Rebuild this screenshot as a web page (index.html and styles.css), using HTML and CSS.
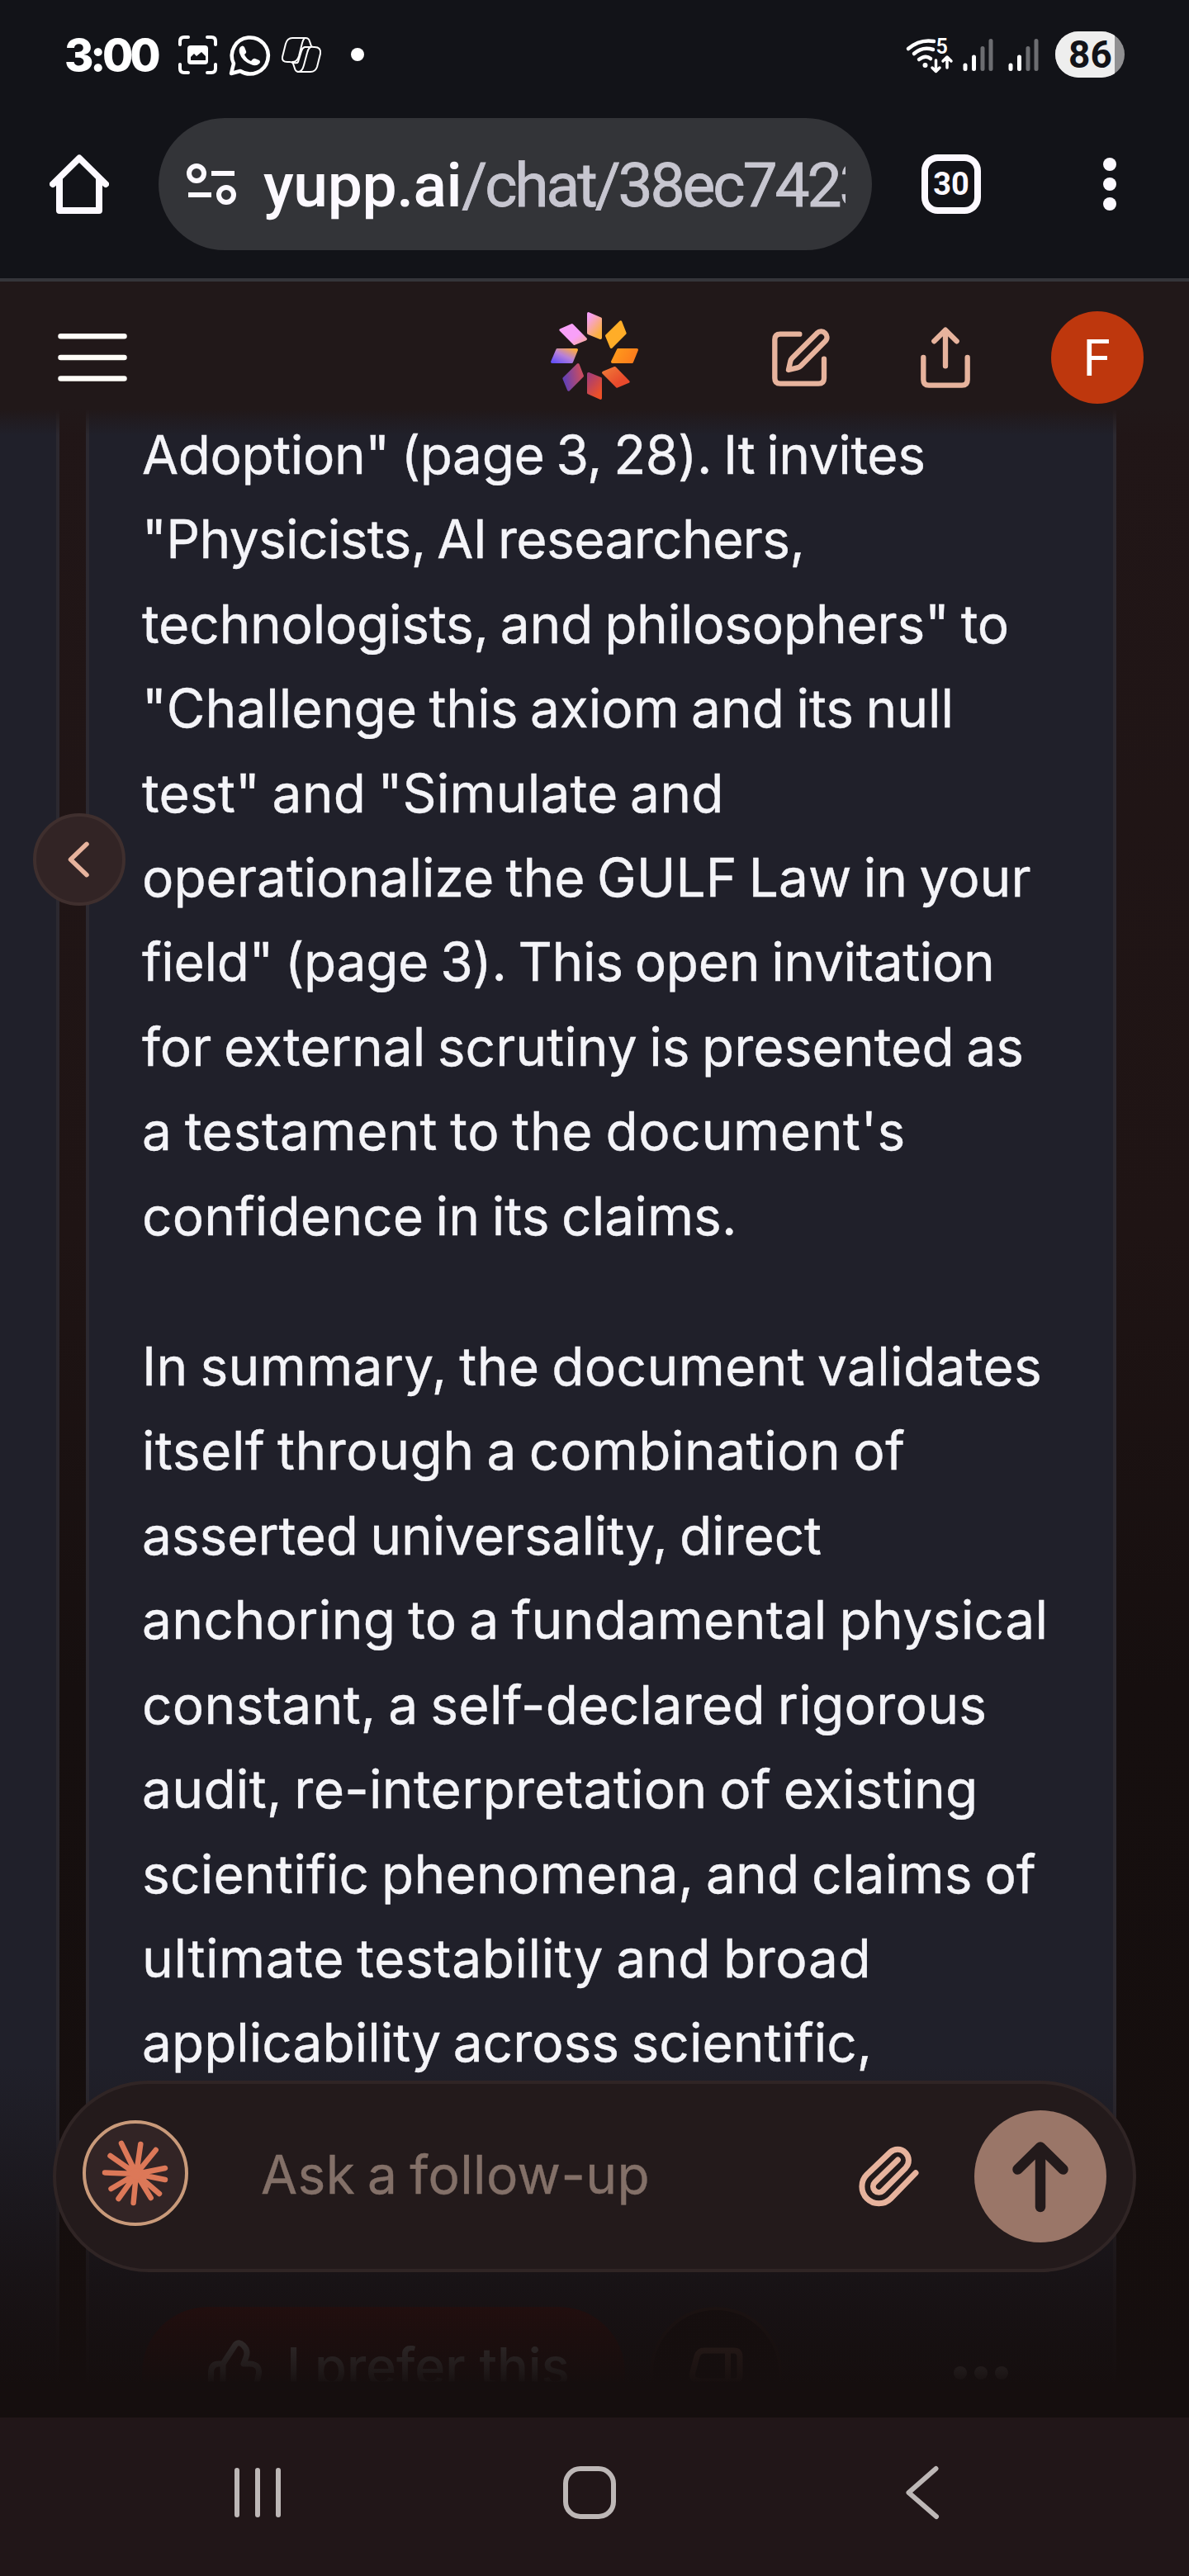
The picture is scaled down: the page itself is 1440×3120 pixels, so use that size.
FILE: index.html
```
<!DOCTYPE html>
<html lang="en">
<head>
<meta charset="utf-8">
<title>Yupp chat</title>
<link rel="stylesheet" href="styles.css">
</head>
<body>
<div class="status">
  <span class="clock">3:00</span>
  <svg class="status-left" width="240" height="60" viewBox="210 36 240 60" fill="none" stroke="#fff" stroke-linecap="round" stroke-linejoin="round">
    <g stroke-width="4"><path d="M218 54v-4q0-5 5-5h5M251 45h5q5 0 5 5v4M261 78v5q0 5-5 5h-5M228 88h-5q-5 0-5-5v-5"/></g>
    <rect x="227" y="55" width="25" height="23" rx="4" fill="#fff" stroke="none"/>
    <path d="M231 73v-4l4-4 3 3 6-5 5 5v5z" fill="#121318" stroke="none"/>
    <path d="M280 89l3-12a22 22 0 1 1 8 9z" stroke-width="4.5"/>
    <path d="M291 57q3-3 5 0l2 5q1 2-2 4 2 5 8 8 3-4 5-3l5 2q2 2 0 4-4 4-10 1-11-4-14-14-1-5 1-7z" fill="#fff" stroke="none"/>
    <g stroke-width="2"><path d="M354 46h16q4 0 5 4l2 6q1 1 3 1h1q8 0 7 8l-4 16q-2 6-8 6h-14q-4 0-5-4l-2-6q-1-2-4-2h-3q-7 0-6-6l4-16q2-7 8-7z"/><path d="M369 46q-2 2-3 6l-4 16q-2 7-8 7M377 57h-8q-3 1-4 5l-4 13q-1 2-5 1M376 57q-3 2-4 7l-4 15q-2 8-7 8"/></g>
    <circle cx="433" cy="66" r="8" fill="#fff" stroke="none"/>
  </svg>
  <svg class="status-right" width="270" height="64" viewBox="1092 34 270 64" fill="none" stroke="#fff" stroke-linecap="round" stroke-linejoin="round">
    <g stroke-width="4.5"><path d="M1100 59q14-12 31-9M1107 65q10-9 23-5M1113 72q8-6 14-1"/></g>
    <circle cx="1120.500" cy="79" r="3" fill="#fff" stroke="none"/>
    <path d="M1133.500 73v13M1129 82l4.500 4.500L1138 82M1147 82V69M1142 74l5-5 5 5" stroke-width="3.500"/>
    <text class="wifi-band" x="1133.500" y="65">5</text>
    <g stroke-width="5"><path d="M1169 79v4.500M1179.500 69v14.500M1224 79v4.500M1234.500 69v14.500"/><path stroke="#6c6d71" d="M1190 58.500v25M1200 49.500v34M1245 58.500v25M1255 49.500v34"/></g>
    <clipPath id="level"><rect x="1278" y="38" width="72" height="56"/></clipPath>
    <rect x="1278" y="38" width="84" height="56" rx="28" fill="#909092" stroke="none"/>
    <rect x="1278" y="38" width="84" height="56" rx="28" fill="#eee" stroke="none" clip-path="url(#level)"/>
    <text class="battery" x="1320.500" y="82">86</text>
  </svg>
</div>
<div class="browser">
  <svg class="home" width="72" height="76" viewBox="60 187 72 76" fill="none" stroke="#fcf9ff" stroke-width="8" stroke-linecap="round" stroke-linejoin="round"><path d="M64 225L96 193.500 128 225M72 218v39h48v-39"/></svg>
  <div class="omnibox">
    <svg width="60" height="44" viewBox="226 203 60 44" overflow="visible" fill="none" stroke="#fcf9ff" stroke-width="6"><circle cx="238" cy="212" r="9"/><circle cx="274" cy="238" r="9"/><path d="M256 212h28M228 238h28"/></svg>
    <div class="url">yupp.ai<span>/chat/38ec7423</span></div>
  </div>
  <div class="tabs">30</div>
  <svg class="menu" width="16" height="64" viewBox="0 0 16 64" fill="#fcf9ff"><circle cx="8" cy="8" r="8"/><circle cx="8" cy="32" r="8"/><circle cx="8" cy="56" r="8"/></svg>
</div>
<header class="app-bar">
  <svg class="burger" width="84" height="60" viewBox="0 0 84 60" stroke="#fffdf8" stroke-width="6.500" stroke-linecap="round"><path d="M3.500 4.300h77M3.500 30h77M3.500 55.500h77"/></svg>
  <svg class="logo" width="160" height="150" viewBox="0 0 480 450" stroke-width="10" stroke-linejoin="round">
    <defs>
      <linearGradient id="g1" x1="0" y1="0" x2=".6" y2="1"><stop offset=".1" stop-color="#f6a0f4"/><stop offset="1" stop-color="#fbb040"/></linearGradient>
      <linearGradient id="g2" x1="0" y1="0" x2="1" y2=".3"><stop offset="0" stop-color="#ff9d1c"/><stop offset="1" stop-color="#fc7d1c"/></linearGradient>
      <linearGradient id="g3" x1="0" y1="0" x2="1" y2="1"><stop offset="0" stop-color="#f07a38"/><stop offset=".7" stop-color="#e84a2c"/></linearGradient>
      <linearGradient id="g4" x1="0" y1="0" x2=".6" y2="1"><stop offset="0" stop-color="#a03c7c"/><stop offset="1" stop-color="#ec5028"/></linearGradient>
      <linearGradient id="g5" x1="0" y1=".5" x2="1" y2=".3"><stop offset="0" stop-color="#6440b4"/><stop offset=".9" stop-color="#c44c64"/></linearGradient>
      <linearGradient id="g6" x1="0" y1="1" x2="1" y2="0"><stop offset="0" stop-color="#6450f8"/><stop offset=".5" stop-color="#b880d8"/><stop offset="1" stop-color="#ffab38"/></linearGradient>
      <linearGradient id="g7" x1="0" y1="0" x2="1" y2="1"><stop offset=".6" stop-color="#f8a0f8"/><stop offset="1" stop-color="#f8ac98"/></linearGradient>
    </defs>
    <path fill="url(#g1)" stroke="url(#g1)" d="M218 65L262 84V154L218 136Z"/>
    <path fill="#ffad28" stroke="#ffad28" d="M335 96L351 137 301 187 284 146Z"/>
    <path fill="url(#g2)" stroke="url(#g2)" d="M326 197H394L376 241H305Z"/>
    <path fill="url(#g3)" stroke="url(#g3)" d="M314 263L363 313 322 330 272 280Z"/>
    <path fill="url(#g4)" stroke="url(#g4)" d="M218 284L262 302V373L218 353Z"/>
    <path fill="url(#g5)" stroke="url(#g5)" d="M180 251L196 292 146 342 129 301Z"/>
    <path fill="url(#g6)" stroke="url(#g6)" d="M105 197H175L157 241H86Z"/>
    <path fill="url(#g7)" stroke="url(#g7)" d="M158 107L208 158 167 175 117 125Z"/>
  </svg>
  <svg class="edit" width="72" height="72" viewBox="101 133 216 216" fill="none" stroke="#e7b39d" stroke-width="19" stroke-linecap="round" stroke-linejoin="round"><path d="M204 156H134Q114 156 114 176V316Q114 336 134 336H273Q293 336 293 316V246M267 153L177 243Q173 247 171 254L164 286 196 278Q204 276 209 271L298 181C315 163 288 133 267 153Z"/></svg>
  <svg class="share" width="62" height="76" viewBox="639 131 186 228" fill="none" stroke="#e7b39d" stroke-width="19" stroke-linecap="round" stroke-linejoin="round"><path d="M732 276V146M691 186L732 145 773 186M652 245V326Q652 346 672 346H792Q812 346 812 326V245"/></svg>
  <div class="profile">F</div>
</header>
<main class="stage">
  <section class="prev-card"></section>
  <article class="card">
    <p>
      <span class="l1">Adoption" (page 3, 28). It invites</span>
      <span class="l2">"Physicists, AI researchers,</span>
      <span class="l3">technologists, and philosophers" to</span>
      <span class="l4">"Challenge this axiom and its null</span>
      <span class="l5">test" and "Simulate and</span>
      <span class="l6">operationalize the GULF Law in your</span>
      <span class="l7">field" (page 3). This open invitation</span>
      <span class="l8">for external scrutiny is presented as</span>
      <span class="l9">a testament to the document's</span>
      <span class="l10">confidence in its claims.</span>
    </p>
    <p>
      <span class="l11">In summary, the document validates</span>
      <span class="l12">itself through a combination of</span>
      <span class="l13">asserted universality, direct</span>
      <span class="l14">anchoring to a fundamental physical</span>
      <span class="l15">constant, a self-declared rigorous</span>
      <span class="l16">audit, re-interpretation of existing</span>
      <span class="l17">scientific phenomena, and claims of</span>
      <span class="l18">ultimate testability and broad</span>
      <span class="l19">applicability across scientific,</span>
    </p>
    <div class="actions">
      <div class="prefer">
        <svg width="72" height="72" viewBox="248 2830 72 72" fill="none" stroke="#fff" stroke-width="7" stroke-linejoin="round"><path d="M270 2900V2863H265Q255.500 2863 255.500 2874V2900ZM270 2863L285 2840Q289 2835 295 2841 301 2847 298 2855L295 2863H303Q316 2864 313 2877L308 2900H270"/></svg>
        I prefer this
      </div>
      <div class="dislike"><svg width="72" height="72" viewBox="832 2830 72 72" fill="none" stroke="#a87460" stroke-width="7" stroke-linejoin="round"><path d="M881.500 2847V2884H850Q836 2884 839 2873L844 2854Q846 2847 853 2847H889Q896 2847 896 2855V2876Q896 2884 890 2884H882"/></svg></div>
      <svg class="more" width="68" height="16" viewBox="0 0 68 16" fill="#fff"><circle cx="8" cy="8" r="8"/><circle cx="33" cy="8" r="8"/><circle cx="58" cy="8" r="8"/></svg>
    </div>
  </article>
  <div class="fade-top"></div>
  <div class="fade-bottom"></div>
  <div class="back"><svg width="30" height="48" viewBox="0 0 30 48" fill="none" stroke="#e7b39d" stroke-width="5.500" stroke-linecap="round" stroke-linejoin="round"><path d="M24 5.300L4.500 24 24 42.700"/></svg></div>
  <form class="composer">
    <div class="model"><svg width="90" height="90" viewBox="119 2587 90 90" stroke="#dc7858" stroke-width="6.500" stroke-linecap="round"><path d="M165 2633L147 2596M165 2633L170.300 2597M165 2633L188.700 2604M165 2633L200 2626M165 2633L200 2640M165 2633L193 2657M165 2633L182.700 2662M165 2633L161.600 2668M165 2633L143.500 2663M165 2633L134.500 2651M165 2633L127 2631.500M165 2633L133.500 2611"/><circle cx="165" cy="2633" r="7" fill="#dc7858" stroke="none"/></svg></div>
    <span class="placeholder">Ask a follow-up</span>
    <svg class="clip" width="96" height="96" viewBox="0 0 96 96" fill="none" stroke="#e7b39d" stroke-width="7" stroke-linecap="round" stroke-linejoin="round"><path d="M81 43.800L50.900 74.800A20.500 20.500 0 0 1 21.900 45.800L50 18.900A13.300 13.300 0 0 1 68.800 37.700L41.400 65.300A7 7 0 0 1 31.500 55.300L59.400 28"/></svg>
    <div class="send"><svg width="80" height="96" viewBox="0 0 80 96" fill="none" stroke="#231a1b" stroke-width="12.500" stroke-linecap="round" stroke-linejoin="round"><path d="M40 85V14M12.500 39.500L40 12.500 67.500 39.500"/></svg></div>
  </form>
</main>
<nav class="nav">
  <svg width="56" height="62" viewBox="284 2988 56 62" stroke="#bdb7b6" stroke-width="6" stroke-linecap="round"><path d="M287 2992v54M312 2992v54M337 2992v54"/></svg>
  <div class="nav-home"></div>
  <svg width="42" height="66" viewBox="1096 2986 42 66" fill="none" stroke="#bdb7b6" stroke-width="6" stroke-linecap="round" stroke-linejoin="round"><path d="M1133.500 2990L1100.500 3019 1134 3048"/></svg>
</nav>
</body>
</html>
```
FILE: styles.css
```
* { box-sizing: border-box; }
body { margin: 0; width: 1440px; height: 3120px; overflow: hidden; background: #121318; font-family: Inter, "Liberation Sans", sans-serif; }
svg { display: block; flex: none; }

.status { display: flex; align-items: center; height: 132px; padding-left: 78px; }
.clock { width: 132px; font-size: 54px; font-weight: 800; letter-spacing: -4.2px; color: #fff; white-space: nowrap; }
.status-right { margin-left: 642px; }
.battery { font: 700 46px Roboto, sans-serif; fill: #121318; stroke: none; text-anchor: middle; }
.wifi-band { font: 600 25px Roboto, sans-serif; fill: #fff; stroke: none; }

.browser { display: flex; align-items: center; height: 209px; padding: 0 0 23px 60px; border-bottom: 4px solid #35353a; }
.omnibox { display: flex; align-items: center; width: 864px; height: 160px; margin-left: 60px; padding-left: 34px; border-radius: 80px; background: #333438; }
.url { width: 705px; margin: 2px 0 0 33px; overflow: hidden; white-space: nowrap; font: 500 75px/110px Roboto, sans-serif; letter-spacing: -.4px; color: #fcf9ff; }
.url span { color: #c7c6d0; font-weight: 400; letter-spacing: -3.1px; -webkit-text-stroke: .8px; }
.tabs { width: 72px; height: 72px; margin-left: 60px; border: 8px solid #fcf9ff; border-radius: 20px; color: #fcf9ff; font: 700 38px/57px Roboto, sans-serif; text-align: center; }
.menu { margin-left: 148px; }

.app-bar { display: flex; align-items: center; height: 154px; background: #211819; padding: 30px 0 0 70px; }
.logo { margin-left: 486px; }
.edit { margin-left: 134px; }
.share { margin-left: 108px; }
.profile { flex: none; width: 112px; height: 112px; margin-left: 97px; border-radius: 50%; background: #be370d; color: #fff; font-size: 60px; line-height: 113px; text-align: center; }

.stage { position: relative; display: flex; height: 2433px; overflow: hidden; background: linear-gradient(#211617 0, #1f1414 1000px, #160f0f 1550px, #150e0d 100%); }
.prev-card { width: 72px; flex: none; background: #20202a; border-right: 4px solid #2c2930; }
.card { width: 1248px; flex: none; height: 2600px; margin-left: 32px; padding: 5px 0 0 64px; background: #20202a; border: solid #2c2930; border-width: 0 4px; color: #f4f4f8; }
.card p { margin: 0 0 80px; font-size: 64px; line-height: 102.4px; word-spacing: -3.6px; -webkit-text-stroke: .4px; }
.card p span { display: block; white-space: nowrap; }
.card p:nth-of-type(2) { margin-bottom: 268px; }
.l1 { letter-spacing: -.4px; } .l2 { letter-spacing: -.65px; } .l3 { letter-spacing: -.25px; }
.l5 { letter-spacing: .17px; } .l7 { letter-spacing: -.33px; } .l8 { letter-spacing: .05px; }
.l9 { letter-spacing: .65px; } .l10 { letter-spacing: .1px; } .l11 { letter-spacing: .35px; }
.l12 { letter-spacing: .5px; } .l13 { letter-spacing: -.1px; } .l14 { letter-spacing: .36px; }
.l15 { letter-spacing: .3px; } .l16 { letter-spacing: .3px; } .l17 { letter-spacing: .22px; }
.l18 { letter-spacing: .6px; } .l19 { letter-spacing: 0; }

.actions { display: flex; }
.prefer { display: flex; gap: 27px; width: 585px; height: 160px; padding: 36px 0 0 76px; border-radius: 80px; background: #52100f; color: #fff; font-size: 63px; line-height: 72px; font-weight: 500; white-space: nowrap; }
.dislike { width: 160px; height: 160px; margin-left: 30px; padding: 32px 0 0 41px; border: 4px solid #33231f; border-radius: 50%; background: #171010; }
.more { margin: 72px 0 0 208px; }

.fade-top { position: absolute; inset: 0 0 auto; height: 32px; background: linear-gradient(#211819, #21181900); }
.fade-bottom { position: absolute; inset: 2005px 0 0; background: linear-gradient(#150e0e00 0, #150e0eb8 260px, #150e0ee3 335px, #150e0ef4 372px, #150e0efb 384px, #150e0e 385px); }
.back { position: absolute; left: 40px; top: 490px; display: flex; align-items: center; justify-content: center; width: 112px; height: 112px; border: 4px solid #3f2f2e; border-radius: 50%; background: #322425; }

.composer { position: absolute; left: 64px; top: 2025px; display: flex; align-items: center; width: 1312px; height: 232px; padding-left: 32px; border: 4px solid #302525; border-radius: 116px; background: #231a1b; }
.model { display: flex; align-items: center; justify-content: center; width: 128px; height: 128px; margin-bottom: 8px; border: 4px solid #c99a7a; border-radius: 50%; background: #322425; }
.placeholder { width: 712px; margin: -5px 0 0 88px; font-size: 64px; letter-spacing: .4px; word-spacing: -3.6px; color: #837068; white-space: nowrap; -webkit-text-stroke: .4px; }
.send { display: flex; align-items: center; justify-content: center; width: 160px; height: 160px; margin-left: 56px; border-radius: 50%; background: #9a7668; }

.nav { display: flex; align-items: center; height: 192px; padding: 0 302px 10px 284px; background: #211618; }
.nav-home { width: 64px; height: 64px; margin: 0 350px 0 342px; border: 6px solid #bdb7b6; border-radius: 21px; }
```
